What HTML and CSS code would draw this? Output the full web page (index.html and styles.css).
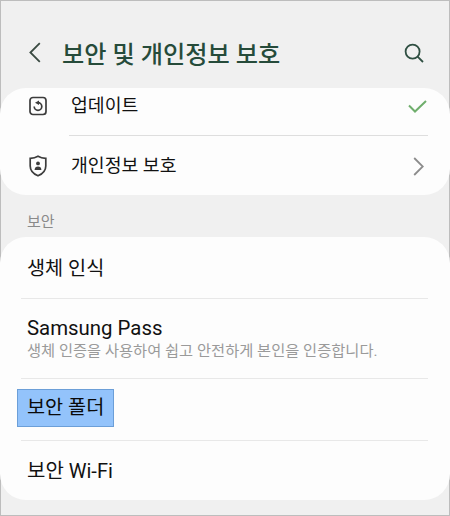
FILE: index.html
```html
<!DOCTYPE html>
<html lang="ko">
<head>
<meta charset="utf-8">
<title>보안 및 개인정보 보호</title>
<link rel="stylesheet" href="styles.css">
</head>
<body>
<div class="screen">
  <header class="appbar">
    <svg class="back" width="12" height="21" viewBox="0 0 12 21"><path d="M10.8 1.2 L1.4 10.5 L10.8 19.8"/></svg>
    <h1 class="title">보안 및 개인정보 보호</h1>
    <svg class="search" width="20" height="20" viewBox="0 0 20 20"><circle cx="8.6" cy="8.6" r="7"/><path d="M13.6 13.6 L19 19"/></svg>
  </header>
  <section class="card card-top">
    <div class="row row-update">
      <svg class="ico" width="18" height="20" viewBox="0 0 18 20"><rect x="1" y="1.5" width="16" height="17" rx="3"/><path d="M9 6.7 A3.8 3.8 0 1 1 5.2 10.5"/><path class="fill" d="M10 4.4 L6 6.7 L10 9 Z"/></svg>
      <span class="label">업데이트</span>
      <svg class="check" width="19" height="13" viewBox="0 0 19 13"><path d="M1 5.5 L7 11.5 L18 1"/></svg>
    </div>
    <div class="divider inset"></div>
    <div class="row row-privacy">
      <svg class="ico" width="18" height="22" viewBox="0 0 18 22"><path d="M9 1.2 C6.6 2.6 4 3.2 1.2 3.4 V11 C1.2 15.6 4.6 19 9 20.8 C13.4 19 16.8 15.6 16.8 11 V3.4 C14 3.2 11.4 2.6 9 1.2 Z"/><circle class="fill" cx="9" cy="8.4" r="1.9"/><path class="fill" d="M5.6 15 C5.6 12.6 7 11.5 9 11.5 C11 11.5 12.4 12.6 12.4 15 Z"/></svg>
      <span class="label">개인정보 보호</span>
      <svg class="chev" width="11" height="19" viewBox="0 0 11 19"><path d="M1.2 1 L9.8 9.5 L1.2 18"/></svg>
    </div>
  </section>
  <h2 class="section">보안</h2>
  <section class="card card-main">
    <div class="item item-bio"><span class="label">생체 인식</span></div>
    <div class="divider"></div>
    <div class="item item-pass">
      <span class="label latin">Samsung Pass</span>
      <span class="sub">생체 인증을 사용하여 쉽고 안전하게 본인을 인증합니다.</span>
    </div>
    <div class="divider"></div>
    <div class="item item-folder"><span class="label mark">보안 폴더</span></div>
    <div class="divider"></div>
    <div class="item item-wifi"><span class="label wide">보안 Wi-Fi</span></div>
  </section>
</div>
</body>
</html>
```
FILE: styles.css
```css
* { box-sizing: border-box; margin: 0; padding: 0; }
html, body { width: 450px; height: 516px; overflow: hidden; }
body { font-family: Roboto, "Noto Sans CJK KR", sans-serif; background: #efefef; }
.screen {
  width: 450px; height: 516px;
  border: 1px solid #bdbdbd;
  background: #f0f0f0;
  display: flex; flex-direction: column;
}
.appbar {
  height: 87px;
  padding: 16px 25px 0 28px;
  display: flex; align-items: center;
  color: #264b3a;
}
.back { fill: none; stroke: #3a4a42; stroke-width: 1.8; margin-right: 21px; flex: none; }
.title { font-size: 24.2px; font-weight: 500; color: #264b3a; flex: 1; white-space: nowrap; }
.search { fill: none; stroke: #2f4f42; stroke-width: 1.8; flex: none; }
.card { background: #fdfdfd; }
.card-top {
  height: 107px;
  border-radius: 26px;
  margin: 0 -1px;
  padding-top: 1px;
}
.row { display: flex; align-items: center; padding: 0 22px 0 29px; }
.row-update { height: 34px; }
.row-privacy { height: 60px; }
.ico { fill: none; stroke: #3c3c3c; stroke-width: 1.7; width: 18px; flex: none; margin-right: 24px; }
.ico .fill { fill: #3c3c3c; stroke: none; }
.label { font-size: 19.7px; color: #111; line-height: 24px; white-space: nowrap; }
.row .label { flex: 1; font-size: 18.3px; }
.latin { font-size: 20.4px; }
.wide { font-size: 20px; }
.check { fill: none; stroke: #6fae6c; stroke-width: 2; flex: none; margin-right: 1px; }
.chev { fill: none; stroke: #8c8c8c; stroke-width: 1.8; flex: none; margin-right: 4px; }
.divider { height: 1px; background: #e8e8e8; margin: 0 22px 0 21px; }
.divider.inset { margin: 12px 22px 0 69px; background: #dedede; }
.section {
  font-size: 15px; font-weight: 400; color: #8a8a8a;
  height: 42px; line-height: 18px; padding: 18px 0 0 26px;
}
.card-main { height: 263px; border-radius: 26px; margin: 0 -1px; }
.item { padding: 0 27px; display: flex; flex-direction: column; justify-content: center; align-items: flex-start; }
.item-bio { height: 61px; padding-top: 2px; }
.item-pass { height: 79px; gap: 1px; }
.item-folder { height: 61px; padding-bottom: 3px; }
.item-wifi { height: 59px; }
.sub { font-size: 15.3px; color: #9a9a9a; line-height: 21px; white-space: nowrap; }
.mark {
  background: #93c3fb;
  border: 1px solid #6c9fd8;
  margin-left: -10px;
  padding: 6px 9px;
  color: #0a0a0a;
}
```
